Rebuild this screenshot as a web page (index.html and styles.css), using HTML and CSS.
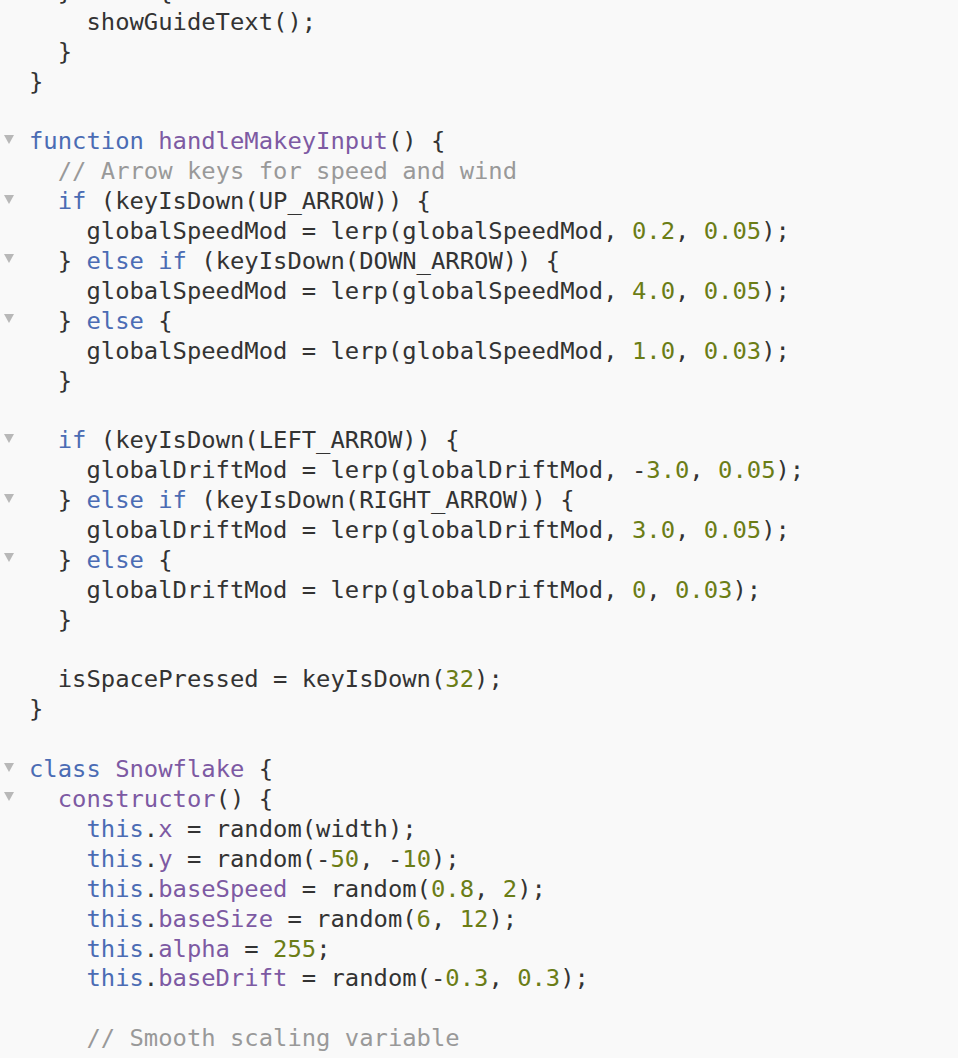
FILE: index.html
```html
<!DOCTYPE html>
<html>
<head>
<meta charset="utf-8">
<link rel="stylesheet" href="styles.css">
</head>
<body>
<div class="editor">
  <div class="lines">
    <div class="line"><span class="gutter"></span><span class="code">  } <span class="kw">else</span> {</span></div>
    <div class="line"><span class="gutter"></span><span class="code">    showGuideText();</span></div>
    <div class="line"><span class="gutter"></span><span class="code">  }</span></div>
    <div class="line"><span class="gutter"></span><span class="code">}</span></div>
    <div class="line"><span class="gutter"></span><span class="code"> </span></div>
    <div class="line"><span class="gutter"><i class="fold"></i></span><span class="code"><span class="kw">function</span> <span class="def">handleMakeyInput</span>() {</span></div>
    <div class="line"><span class="gutter"></span><span class="code">  <span class="cm">// Arrow keys for speed and wind</span></span></div>
    <div class="line"><span class="gutter"><i class="fold"></i></span><span class="code">  <span class="kw">if</span> (keyIsDown(UP_ARROW)) {</span></div>
    <div class="line"><span class="gutter"></span><span class="code">    globalSpeedMod = lerp(globalSpeedMod, <span class="num">0.2</span>, <span class="num">0.05</span>);</span></div>
    <div class="line"><span class="gutter"><i class="fold"></i></span><span class="code">  } <span class="kw">else if</span> (keyIsDown(DOWN_ARROW)) {</span></div>
    <div class="line"><span class="gutter"></span><span class="code">    globalSpeedMod = lerp(globalSpeedMod, <span class="num">4.0</span>, <span class="num">0.05</span>);</span></div>
    <div class="line"><span class="gutter"><i class="fold"></i></span><span class="code">  } <span class="kw">else</span> {</span></div>
    <div class="line"><span class="gutter"></span><span class="code">    globalSpeedMod = lerp(globalSpeedMod, <span class="num">1.0</span>, <span class="num">0.03</span>);</span></div>
    <div class="line"><span class="gutter"></span><span class="code">  }</span></div>
    <div class="line"><span class="gutter"></span><span class="code"> </span></div>
    <div class="line"><span class="gutter"><i class="fold"></i></span><span class="code">  <span class="kw">if</span> (keyIsDown(LEFT_ARROW)) {</span></div>
    <div class="line"><span class="gutter"></span><span class="code">    globalDriftMod = lerp(globalDriftMod, -<span class="num">3.0</span>, <span class="num">0.05</span>);</span></div>
    <div class="line"><span class="gutter"><i class="fold"></i></span><span class="code">  } <span class="kw">else if</span> (keyIsDown(RIGHT_ARROW)) {</span></div>
    <div class="line"><span class="gutter"></span><span class="code">    globalDriftMod = lerp(globalDriftMod, <span class="num">3.0</span>, <span class="num">0.05</span>);</span></div>
    <div class="line"><span class="gutter"><i class="fold"></i></span><span class="code">  } <span class="kw">else</span> {</span></div>
    <div class="line"><span class="gutter"></span><span class="code">    globalDriftMod = lerp(globalDriftMod, <span class="num">0</span>, <span class="num">0.03</span>);</span></div>
    <div class="line"><span class="gutter"></span><span class="code">  }</span></div>
    <div class="line"><span class="gutter"></span><span class="code"> </span></div>
    <div class="line"><span class="gutter"></span><span class="code">  isSpacePressed = keyIsDown(<span class="num">32</span>);</span></div>
    <div class="line"><span class="gutter"></span><span class="code">}</span></div>
    <div class="line"><span class="gutter"></span><span class="code"> </span></div>
    <div class="line"><span class="gutter"><i class="fold"></i></span><span class="code"><span class="kw">class</span> <span class="def">Snowflake</span> {</span></div>
    <div class="line"><span class="gutter"><i class="fold"></i></span><span class="code">  <span class="def">constructor</span>() {</span></div>
    <div class="line"><span class="gutter"></span><span class="code">    <span class="kw">this</span>.<span class="prop">x</span> = random(width);</span></div>
    <div class="line"><span class="gutter"></span><span class="code">    <span class="kw">this</span>.<span class="prop">y</span> = random(-<span class="num">50</span>, -<span class="num">10</span>);</span></div>
    <div class="line"><span class="gutter"></span><span class="code">    <span class="kw">this</span>.<span class="prop">baseSpeed</span> = random(<span class="num">0.8</span>, <span class="num">2</span>);</span></div>
    <div class="line"><span class="gutter"></span><span class="code">    <span class="kw">this</span>.<span class="prop">baseSize</span> = random(<span class="num">6</span>, <span class="num">12</span>);</span></div>
    <div class="line"><span class="gutter"></span><span class="code">    <span class="kw">this</span>.<span class="prop">alpha</span> = <span class="num">255</span>;</span></div>
    <div class="line"><span class="gutter"></span><span class="code">    <span class="kw">this</span>.<span class="prop">baseDrift</span> = random(-<span class="num">0.3</span>, <span class="num">0.3</span>);</span></div>
    <div class="line"><span class="gutter"></span><span class="code"> </span></div>
    <div class="line"><span class="gutter"></span><span class="code">    <span class="cm">// Smooth scaling variable</span></span></div>
  </div>
</div>
</body>
</html>
```
FILE: styles.css
```css
html, body {
  margin: 0;
  padding: 0;
  background: #f9f9f9;
}
.editor {
  width: 958px;
  height: 1058px;
  overflow: hidden;
  background: #f9f9f9;
}
.lines {
  margin-top: -22px;
  font-family: "DejaVu Sans Mono", "Liberation Mono", monospace;
  font-size: 23.85px;
  color: #333333;
}
.line {
  display: flex;
  height: 29.9px;
  line-height: 29.9px;
  align-items: center;
}
.gutter {
  width: 29px;
  flex: none;
  display: flex;
  justify-content: flex-start;
  padding-left: 4px;
  box-sizing: border-box;
}
.fold {
  display: block;
  width: 0;
  height: 0;
  border-left: 5px solid transparent;
  border-right: 5px solid transparent;
  border-top: 9px solid #b8b8b8;
  margin-top: -6px;
}
.code {
  white-space: pre;
}
.kw { color: #4b6cb4; }
.def { color: #7d5aa3; }
.prop { color: #7d5aa3; }
.num { color: #6b7d16; }
.cm { color: #999999; }
```
